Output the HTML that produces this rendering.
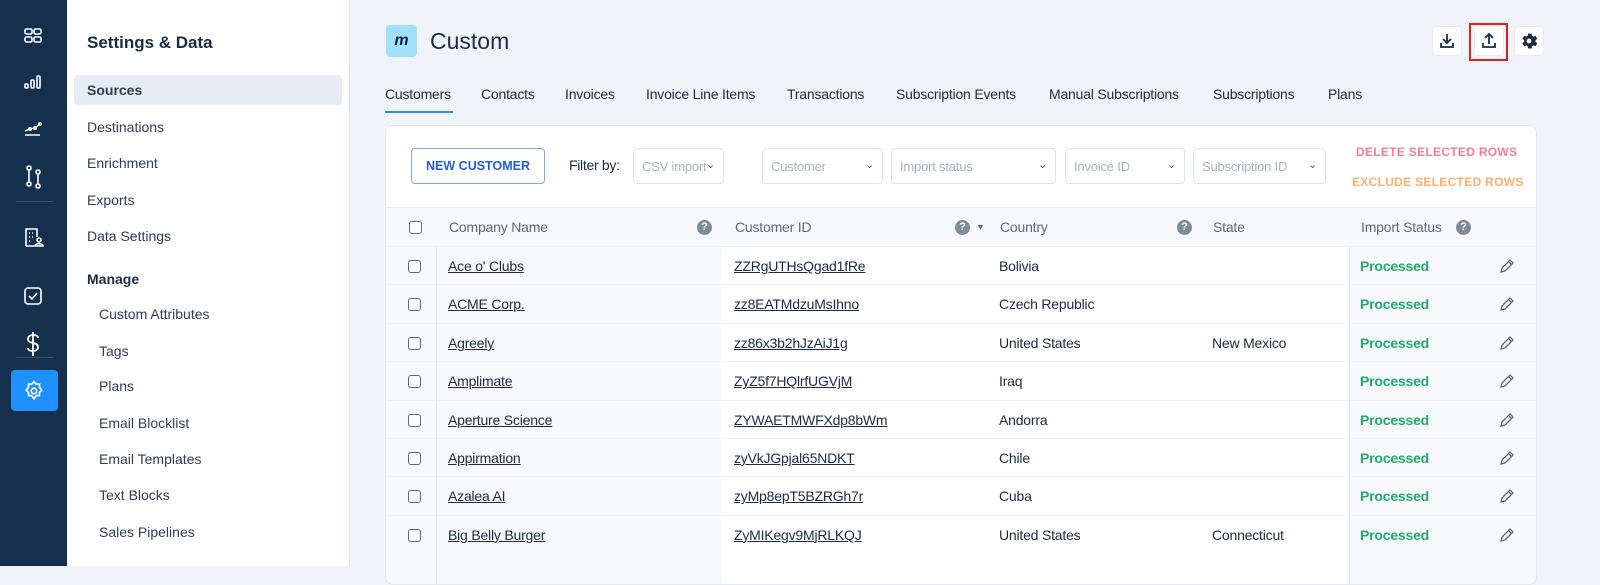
<!DOCTYPE html>
<html><head><meta charset="utf-8"><style>
*{box-sizing:border-box;margin:0;padding:0}
body{width:1600px;height:566px;overflow:hidden;font-family:"Liberation Sans",sans-serif;background:#f0f3f8;position:relative;color:#1b2b44}
.rail{position:absolute;left:0;top:0;width:67px;height:566px;background:#15304d}
.rail svg{position:absolute;left:22px}
.sep{position:absolute;left:16px;width:37px;height:1px;background:#3a5372}
.panel{position:absolute;left:67px;top:0;width:283px;height:566px;background:#fff;border-right:1px solid #e1e6ee}
.panel .t{position:absolute;left:20px;top:33px;font-size:17px;font-weight:bold;color:#1b2b44}
.item{position:absolute;left:20px;font-size:14px;color:#2d3e56}
.sub{left:32px}
.sel{position:absolute;left:7px;top:75px;width:268px;height:30px;background:#e6ecf4;border-radius:4px}
.abs{position:absolute}
.tab{position:absolute;top:86px;font-size:14px;color:#1b2b44;letter-spacing:-.2px}
.card{position:absolute;left:385px;top:125px;width:1152px;height:460px;background:#fff;border-radius:8px;border:1px solid #e4e9f0;overflow:hidden}
.sel2{position:absolute;top:22px;height:36px;border:1px solid #dfe4eb;border-radius:4px;font-size:13px;color:#a8b3c2;padding:10px 8px;white-space:nowrap;overflow:hidden;letter-spacing:-.2px}
.sel2 b{position:absolute;right:8px;top:9px;font-weight:normal;color:#4a5568;font-size:11px;background:#fff}
.row{position:absolute;left:0;width:1152px;border-top:1px solid #eef1f5;height:39px}
.cell{position:absolute;top:11px;font-size:14px;letter-spacing:-.2px}
.u{text-decoration:underline;color:#1b2b44}
.cb{position:absolute;left:23px;top:13px;width:13px;height:13px;border:1.5px solid #5d6b7d;border-radius:3px;background:#fff}
.q{position:absolute;top:12px;width:15px;height:15px;border-radius:50%;background:#7d8b99;color:#fff;font-size:11px;font-weight:bold;text-align:center;line-height:15px}
.hd{color:#5d6b7d;font-size:14px}
.ok{color:#1fae6a;font-weight:bold}
.btn{position:absolute;top:26px;width:30px;height:30px;background:#fff;border-radius:4px;border:1px solid #e6eaf0}
</style></head><body>
<div class="rail">
<svg style="top:25px" width="22" height="22" viewBox="0 0 22 22" fill="none" stroke="#fff" stroke-width="1.6"><rect x="3" y="4" width="7" height="5" rx="1.5"/><rect x="12" y="4" width="7" height="5" rx="1.5"/><rect x="3" y="12" width="7" height="5" rx="1.5"/><rect x="12" y="12" width="7" height="5" rx="1.5"/></svg>
<svg style="top:71px" width="22" height="22" viewBox="0 0 22 22" fill="none" stroke="#fff" stroke-width="1.6"><rect x="3" y="13" width="3" height="4" rx="1"/><rect x="9" y="9" width="3" height="8" rx="1"/><rect x="15" y="5" width="3" height="12" rx="1"/></svg>
<svg style="top:117px" width="22" height="22" viewBox="0 0 22 22" fill="none" stroke="#fff" stroke-width="1.4"><path d="M3 18h15M3 14l5-2 5-1 5-4"/><circle cx="8" cy="12" r="1.3"/><circle cx="13" cy="11" r="1.3"/><circle cx="18" cy="7" r="1.3"/></svg>
<svg style="top:165px" width="22" height="24" viewBox="0 0 22 24" fill="none" stroke="#fff" stroke-width="1.6"><circle cx="7" cy="3" r="2"/><circle cx="7" cy="19" r="2"/><path d="M7 5v12"/><circle cx="16" cy="7" r="2"/><circle cx="16" cy="21" r="2"/><path d="M16 9v10"/></svg>
<div class="sep" style="top:201px"></div>
<svg style="top:225px" width="24" height="24" viewBox="0 0 24 24" fill="none" stroke="#fff" stroke-width="1.6"><path d="M4 21V4h11v8M4 21h8"/><path d="M7 8h1M10 8h1M7 12h1M7 16h1M10 12h1"/><circle cx="17" cy="15" r="2"/><path d="M13 21c0-3 8-3 8 0z"/></svg>
<svg style="top:285px" width="22" height="22" viewBox="0 0 22 22" fill="none" stroke="#fff" stroke-width="1.6"><rect x="3" y="3" width="16" height="16" rx="3"/><path d="M7 11l3 3 5-6"/></svg>
<svg style="top:331px" width="22" height="26" viewBox="0 0 22 26" fill="none" stroke="#fff" stroke-width="1.8"><path d="M11 1v24M16 7c0-2-2-3-5-3s-5 1.5-5 4 2 3.5 5 4 5 1.5 5 4-2 4-5 4-5-1-5-3"/></svg>
<div class="sep" style="top:357px"></div>
<div style="position:absolute;left:11px;top:370px;width:47px;height:41px;background:#1e90ff;border-radius:4px"></div>
<svg style="top:380px;left:23px" width="22" height="22" viewBox="0 0 24 24" fill="none" stroke="#fff" stroke-width="1.8"><circle cx="12" cy="12" r="3"/><path d="M12 2l2.5 2.5h3.5v3.5L20.5 11 18 13.5V17h-3.5L12 20.5 9.5 17H6v-3.5L3.5 11 6 8V4.5h3.5z"/></svg>
</div>
<div class="panel">
<div class="t">Settings &amp; Data</div>
<div class="sel"></div>
<div class="item" style="top:82px;font-weight:bold">Sources</div>
<div class="item" style="top:119px">Destinations</div>
<div class="item" style="top:155px">Enrichment</div>
<div class="item" style="top:192px">Exports</div>
<div class="item" style="top:228px">Data Settings</div>
<div class="item" style="top:271px;font-weight:bold;color:#1b2b44">Manage</div>
<div class="item sub" style="top:306px">Custom Attributes</div>
<div class="item sub" style="top:343px">Tags</div>
<div class="item sub" style="top:378px">Plans</div>
<div class="item sub" style="top:415px">Email Blocklist</div>
<div class="item sub" style="top:451px">Email Templates</div>
<div class="item sub" style="top:487px">Text Blocks</div>
<div class="item sub" style="top:524px">Sales Pipelines</div>
</div>
<div class="abs" style="left:386px;top:25px;width:31px;height:32px;background:#9fe1fb;border-radius:4px;font-weight:bold;font-style:italic;font-size:16px;text-align:center;line-height:32px;color:#0e2036">m</div>
<div class="abs" style="left:430px;top:28px;font-size:23px;color:#1b2b44">Custom</div>
<div class="btn" style="left:1432px"><svg width="28" height="28" viewBox="0 0 28 28" fill="none" stroke="#1b2b44" stroke-width="1.8"><path d="M14 7v9M10 12l4 4 4-4M8 16v4h12v-4"/></svg></div>
<div class="btn" style="left:1474px"><svg width="28" height="28" viewBox="0 0 28 28" fill="none" stroke="#1b2b44" stroke-width="1.8"><path d="M14 17V8M10 11l4-4 4 4M8 16v4h12v-4"/></svg></div>
<div class="abs" style="left:1469px;top:23px;width:39px;height:38px;border:2px solid #e02020"></div>
<div class="btn" style="left:1514px"><svg width="28" height="28" viewBox="0 0 24 24"><path fill="#1b2b44" d="M12 8.5a3.5 3.5 0 100 7 3.5 3.5 0 000-7zM19.4 13a7.5 7.5 0 000-2l2-1.6-2-3.4-2.4 1a7.4 7.4 0 00-1.700-1L15 3.5h-4L10.6 6a7.4 7.4 0 00-1.7 1l-2.4-1-2 3.4 2 1.6a7.5 7.5 0 000 2l-2 1.6 2 3.4 2.4-1a7.4 7.4 0 001.7 1l.4 2.5h4l.4-2.5a7.4 7.4 0 001.7-1l2.4 1 2-3.4z" transform="translate(12 12) scale(.75) translate(-12 -12)"/><circle cx="12" cy="12" r="2" fill="#fff"/></svg></div>
<div class="tab" style="left:385px">Customers</div>
<div class="abs" style="left:385px;top:111px;width:68px;height:2px;background:#1e90ff"></div>
<div class="tab" style="left:481px">Contacts</div>
<div class="tab" style="left:565px">Invoices</div>
<div class="tab" style="left:646px">Invoice Line Items</div>
<div class="tab" style="left:787px">Transactions</div>
<div class="tab" style="left:896px">Subscription Events</div>
<div class="tab" style="left:1049px">Manual Subscriptions</div>
<div class="tab" style="left:1213px">Subscriptions</div>
<div class="tab" style="left:1328px">Plans</div>
<div class="card">
<div class="abs" style="left:25px;top:22px;width:134px;height:36px;border:1px solid #7fa6e6;border-radius:4px;color:#1f5fd6;font-weight:bold;font-size:12.5px;text-align:center;line-height:34px">NEW CUSTOMER</div>
<div class="abs" style="left:183px;top:31px;font-size:14px;letter-spacing:-.3px">Filter by:</div>
<div class="sel2" style="left:247px;width:91px">CSV import<b>⌄</b></div>
<div class="sel2" style="left:376px;width:121px">Customer<b>⌄</b></div>
<div class="sel2" style="left:505px;width:165px">Import status<b>⌄</b></div>
<div class="sel2" style="left:679px;width:120px">Invoice ID<b>⌄</b></div>
<div class="sel2" style="left:807px;width:133px">Subscription ID<b>⌄</b></div>
<div class="abs" style="left:970px;top:19px;font-size:12px;font-weight:bold;color:#ff7a93;letter-spacing:.3px">DELETE SELECTED ROWS</div>
<div class="abs" style="left:966px;top:49px;font-size:12px;font-weight:bold;color:#ffad6a;letter-spacing:.3px">EXCLUDE SELECTED ROWS</div>
<div class="abs" style="left:0;top:81px;width:335px;height:400px;background:#f7f9fc"></div>
<div class="abs" style="left:963px;top:81px;width:190px;height:400px;background:#f7f9fc;border-left:1px solid #e6eaf0"></div>
<div class="abs" style="left:50px;top:81px;width:1px;height:400px;background:#e6eaf0"></div>
<div class="row" style="top:81px;background:#f7f9fc;border-top:1px solid #e6eaf0">
<div class="cb"></div>
<div class="cell hd" style="left:63px">Company Name</div><div class="q" style="left:311px">?</div>
<div class="cell hd" style="left:349px">Customer ID</div><div class="q" style="left:569px">?</div><div class="cell hd" style="left:590px;font-size:9px;top:14px">▼</div>
<div class="cell hd" style="left:614px">Country</div><div class="q" style="left:791px">?</div>
<div class="cell hd" style="left:827px">State</div>
<div class="cell hd" style="left:975px">Import Status</div><div class="q" style="left:1070px">?</div>
</div>
</div>
<div id="rows" class="abs" style="left:385px;top:0"></div>
<script>
var d=[["Ace o' Clubs","ZZRgUTHsQgad1fRe","Bolivia",""],["ACME Corp.","zz8EATMdzuMsIhno","Czech Republic",""],["Agreely","zz86x3b2hJzAiJ1g","United States","New Mexico"],["Amplimate","ZyZ5f7HQlrfUGVjM","Iraq",""],["Aperture Science","ZYWAETMWFXdp8bWm","Andorra",""],["Appirmation","zyVkJGpjal65NDKT","Chile",""],["Azalea AI","zyMp8epT5BZRGh7r","Cuba",""],["Big Belly Burger","ZyMIKegv9MjRLKQJ","United States","Connecticut"]];
var h='';d.forEach(function(r,i){var t=246+i*38.4;h+='<div class="row" style="top:'+t+'px;width:1152px"><div class="cb"></div><div class="cell u" style="left:63px">'+r[0]+'</div><div class="cell u" style="left:349px">'+r[1]+'</div><div class="cell" style="left:614px">'+r[2]+'</div><div class="cell" style="left:827px">'+r[3]+'</div><div class="cell ok" style="left:975px">Processed</div><svg style="position:absolute;left:1113px;top:11px" width="17" height="17" viewBox="0 0 17 17" fill="none" stroke="#5d6b7d" stroke-width="1.3"><path d="M3 14l1-4 8-8 3 3-8 8z M10.5 3.5l3 3"/></svg></div>'});
document.getElementById('rows').innerHTML=h;
</script>
</body></html>
